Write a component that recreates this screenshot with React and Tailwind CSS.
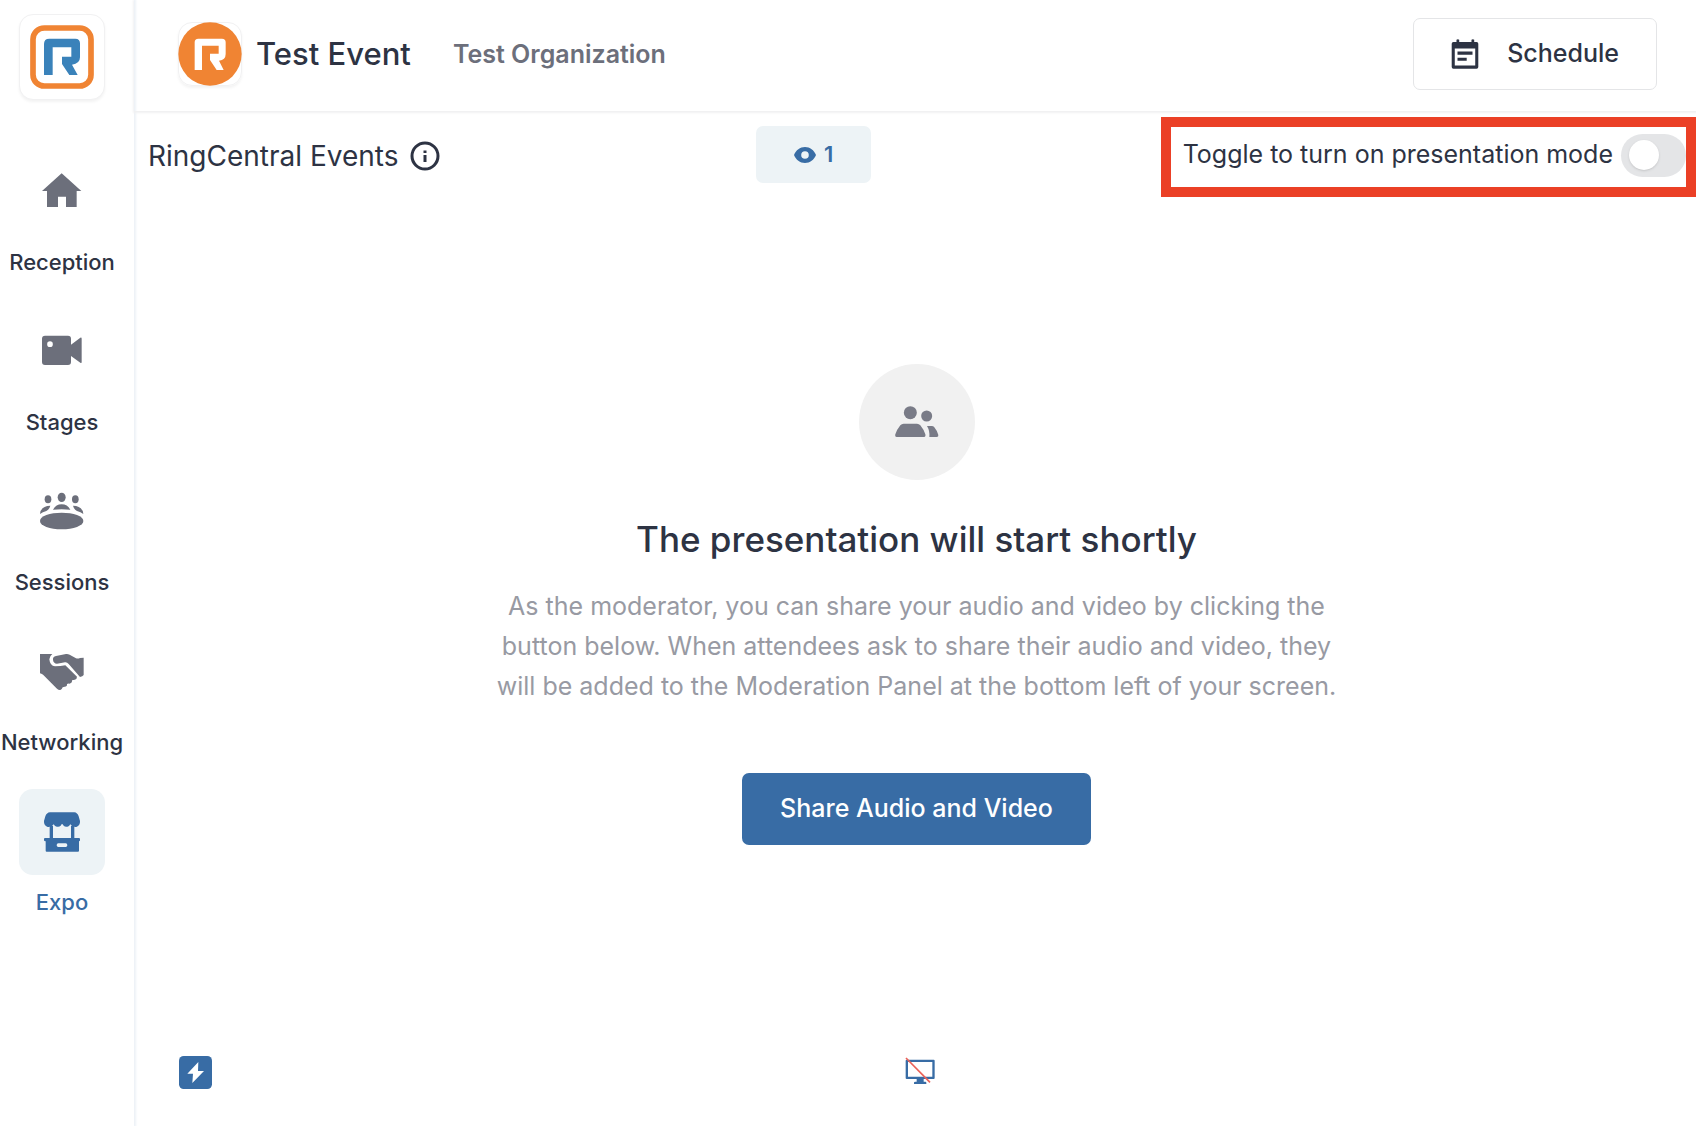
import React from "react";

function HomeIcon() {
  return (
    <svg width="48" height="48" viewBox="114 504 144 144" fill="currentColor" aria-hidden="true">
      <path d="M126 573 185 520 244 573H230V621H198V590H174V621H141V573Z" />
    </svg>
  );
}

function StagesIcon() {
  return (
    <svg width="48" height="48" viewBox="114 54 144 144" fill="currentColor" aria-hidden="true">
      <path
        fillRule="evenodd"
        d="M135 77H204Q213 77 213 86V104L241 83Q245 81 245 86V156Q245 161 241 158L213 138V156Q213 165 204 165H135Q126 165 126 156V86Q126 77 135 77ZM150 94A8.500 8.500 0 1 0 150 111A8.500 8.500 0 1 0 150 94Z"
      />
    </svg>
  );
}

function SessionsIcon() {
  return (
    <svg width="48" height="48" viewBox="114 534 144 144" fill="currentColor" aria-hidden="true">
      <ellipse cx="185" cy="633" rx="65" ry="25" />
      <ellipse cx="185" cy="562" rx="12" ry="14" />
      <ellipse cx="144" cy="568" rx="10" ry="12" />
      <ellipse cx="226" cy="568" rx="10" ry="12" />
      <path d="M159 599Q168 583 185 583Q202 583 211 599Q185 596 159 599Z" />
      <path d="M120 612Q122 588 151 587Q148 599 139 603Q128 606 120 612Z" />
      <path d="M250 612Q248 588 219 587Q222 599 231 603Q242 606 250 612Z" />
    </svg>
  );
}

function NetworkingIcon() {
  return (
    <svg width="48" height="48" viewBox="114 84 144 144" fill="currentColor" aria-hidden="true">
      <path d="M120 102H157Q148 109 148 118Q150 138 165 139Q182 139 196 136L231 170Q231 178 224 179Q222 180 216 181Q217 189 209 191Q205 190 201 192Q202 200 194 200L188 202Q186 208 181 210Q176 211 171 206L130 165Q127 162 120 160Z" />
      <path d="M159 119Q158 110 168 108L198 102Q203 101 209 104L228 115Q234 117 240 114L251 113V165Q248 170 240 171L206 132Q201 126 195 127Q183 130 171 131Q160 130 159 119Z" />
    </svg>
  );
}

function ExpoIcon() {
  return (
    <svg width="48" height="48" viewBox="114 565 144 144" fill="currentColor" aria-hidden="true">
      <path d="M150 578H223Q232 579 236 590L240 604Q241 617 229 622Q218 624 211 614Q207 622 201 621Q195 622 191 618Q186 608 182 618Q178 622 172 621Q165 622 161 614Q154 624 143 622Q131 617 132 604L136 590Q140 579 150 578Z" />
      <path d="M149 618H159V656H149ZM213 618H223V656H213Z" />
      <path
        fillRule="evenodd"
        d="M135 655H237Q240 655 240 658V662Q240 665 237 665V693Q237 696 234 696H140Q137 696 137 693V665Q132 665 132 662V658Q132 655 135 655ZM175 671Q170 671 170 677Q170 682 175 682H197Q202 682 202 677Q202 671 197 671Z"
      />
    </svg>
  );
}

const NAV = [
  { label: "Reception", Icon: HomeIcon },
  { label: "Stages", Icon: StagesIcon },
  { label: "Sessions", Icon: SessionsIcon },
  { label: "Networking", Icon: NetworkingIcon },
  { label: "Expo", Icon: ExpoIcon, active: true },
];

function Sidebar() {
  return (
    <aside className="flex w-[134px] shrink-0 flex-col pr-[10px] pt-[14px] shadow-[1px_0_2px_1px_#edf2f7]">
      <a
        href="#home"
        aria-label="Home"
        className="flex size-[86px] items-center justify-center self-center rounded-[14px] border border-[#f1f1f2] bg-white shadow-[0_2px_3px_#0000000d]"
      >
        <svg width="64" height="64" viewBox="90 76 192 192" aria-hidden="true">
          <rect x="99" y="85" width="174" height="174" rx="34" fill="none" stroke="#f08433" strokeWidth="17" />
          <path
            fill="#3a82ba"
            d="M132 226V133Q132 117 148 117H226Q240 117 240 131V173Q240 192 216 195L233 226H208L186 193V171H214V143H158V226Z"
          />
        </svg>
      </a>
      <nav className="mt-[49px] flex flex-col gap-8">
        {NAV.map(({ label, Icon, active }) => (
          <a
            key={label}
            href={`#${label.toLowerCase()}`}
            aria-current={active ? "page" : undefined}
            className={`flex flex-col items-center gap-3 ${active ? "text-[#386ca5]" : "text-[#2d3343]"}`}
          >
            <span
              className={`flex size-[86px] items-center justify-center rounded-[14px] ${
                active ? "bg-[#edf3f6]" : "text-[#6c6f7b]"
              }`}
            >
              <Icon />
            </span>
            <span className="text-[22px] leading-[30px] font-medium">{label}</span>
          </a>
        ))}
      </nav>
    </aside>
  );
}

function Header() {
  return (
    <header className="flex h-[111px] items-center pr-[39px] pl-[44px] pb-[3px] shadow-[0_1px_2px_1px_#f1f1f2]">
      <span className="flex size-16 shrink-0 items-center justify-center rounded-[14px] border border-[#f1f1f2] shadow-[0_2px_3px_#0000000d]">
        <svg className="shrink-0" width="64" height="64" viewBox="532 64 192 192" role="img" aria-label="Event logo">
          <circle cx="628" cy="160" r="95" fill="#f08433" />
          <path
            fill="#fff"
            d="M582 208V125Q582 114 593 114H664Q675 114 675 125V160Q675 178 655 180L669 208H648L628 178V159H654V135H604V208Z"
          />
        </svg>
      </span>
      <h1 className="ml-[14px] text-[31px] leading-10 font-medium">Test Event</h1>
      <span className="ml-[42px] text-[25px] leading-8 font-semibold text-[#6c6f7b]">Test Organization</span>
      <button
        type="button"
        className="ml-auto flex h-[72px] items-center gap-7 rounded-[7px] border border-[#e4e5e7] px-[37px] text-[25px] font-medium"
      >
        <svg width="28" height="30" viewBox="863 116 80 88" fill="currentColor" aria-hidden="true">
          <path
            fillRule="evenodd"
            d="M878 118Q882 115 886 118V125H922V118Q926 115 930 118V125H937Q942 125 942 130V198Q942 203 937 203H869Q864 203 864 198V130Q864 125 869 125H878ZM873 144V194H933V144Z"
          />
          <path d="M881 153H925V162H881ZM881 171H908V180H881Z" />
        </svg>
        Schedule
      </button>
    </header>
  );
}

function Toolbar() {
  return (
    <div className="flex items-center justify-between pt-[6px] pl-[14px]">
      <div className="mb-[3px] flex items-center gap-3 pr-[26px]">
        <h2 className="text-[28px] leading-9">RingCentral Events</h2>
        <button type="button" aria-label="Event information">
          <svg className="block" width="30" height="30" viewBox="0 0 30 30" fill="none" aria-hidden="true">
            <circle cx="15" cy="15" r="13" stroke="currentColor" strokeWidth="3" />
            <path fill="currentColor" d="M13.500 9.500H16.500V12H13.500ZM13.500 14H16.500V21H13.500Z" />
          </svg>
        </button>
      </div>
      <div className="mb-[5px] flex h-[57px] w-[115px] items-center justify-center gap-2 rounded-[7px] bg-[#edf3f6] text-[22px] font-semibold text-[#386ca5]">
        <svg width="22" height="16" viewBox="0 0 22 16" fill="currentColor" aria-hidden="true">
          <path
            fillRule="evenodd"
            d="M11 0C16 0 20 3.200 22 8C20 12.800 16 16 11 16S2 12.800 0 8C2 3.200 6 0 11 0ZM11 4.200A3.800 3.800 0 1 0 11 11.800A3.800 3.800 0 1 0 11 4.200Z"
          />
        </svg>
        <span>1</span>
      </div>
      <label className="flex h-20 items-center gap-2 border-10 border-[#eb4026] pb-1 pl-3 text-[25px]">
        Toggle to turn on presentation mode
        <input
          type="checkbox"
          role="switch"
          className="flex h-[43px] w-[65px] shrink-0 appearance-none items-center rounded-full bg-[#e4e5e7] px-2 before:size-[30px] before:rounded-full before:bg-white before:shadow-sm checked:justify-end checked:bg-[#386ca5]"
        />
      </label>
    </div>
  );
}

function Waiting() {
  return (
    <section className="flex flex-1 flex-col items-center justify-center pb-px pl-[3px] text-center">
      <div className="flex size-[116px] items-center justify-center rounded-full bg-[#f1f1f1] text-[#797b87]">
        <svg width="44" height="32" viewBox="164 170 132 96" fill="currentColor" aria-hidden="true">
          <circle cx="210" cy="190" r="19.500" />
          <circle cx="259" cy="200" r="16.500" />
          <path d="M190 223H230Q236 223 240 228Q250 240 255 255Q257 263 250 263H170Q163 263 165 255Q170 240 180 228Q184 223 190 223Z" />
          <path d="M260 230H274Q279 230 282 234Q291 245 294 257Q295 263 289 263H267Q269 245 260 230Z" />
        </svg>
      </div>
      <h2 className="mt-9 text-[35px] leading-[46px] font-medium">The presentation will start shortly</h2>
      <p className="mt-6 max-w-[860px] text-[25px] leading-10 text-[#989aa3]">
        As the moderator, you can share your audio and video by clicking the
        <br />
        button below. When attendees ask to share their audio and video, they
        <br />
        will be added to the Moderation Panel at the bottom left of your screen.
      </p>
      <button
        type="button"
        className="mt-[67px] h-[72px] rounded-[7px] bg-[#386ca5] px-[38px] text-[25px] font-medium text-white"
      >
        Share Audio and Video
      </button>
    </section>
  );
}

function BottomBar() {
  return (
    <footer className="grid grid-cols-[1fr_auto_1fr] items-start pt-11 pb-[37px] pl-[9px]">
      <button type="button" aria-label="Quick actions" className="ml-9 justify-self-start">
        <svg className="block" width="33" height="33" viewBox="57 48 99 99" aria-hidden="true">
          <rect x="57" y="48" width="99" height="99" rx="14" fill="#386ca5" />
          <path d="M115 66 82 101H99L97 129 132 93H114Z" fill="#fff" />
        </svg>
      </button>
      <button type="button" aria-label="Share screen">
        <svg className="block" width="30" height="30" viewBox="46 34 90 90" aria-hidden="true">
          <path
            fill="#386ca5"
            fillRule="evenodd"
            d="M50 45H132Q135 45 135 48V100Q135 103 132 103H102V111H107Q110 111 110 114V118H73V114Q73 111 77 111H81V103H51Q48 103 48 100V48Q48 45 51 45ZM55 52V96H128V52Z"
          />
          <path d="M49 40 121 113" stroke="#ea6258" strokeWidth="5" />
        </svg>
      </button>
    </footer>
  );
}

export default function App() {
  return (
    <div className="flex min-h-screen bg-white font-['Inter',sans-serif] text-[#2d3343]">
      <Sidebar />
      <main className="flex min-w-0 flex-1 flex-col">
        <Header />
        <Toolbar />
        <Waiting />
        <BottomBar />
      </main>
    </div>
  );
}
